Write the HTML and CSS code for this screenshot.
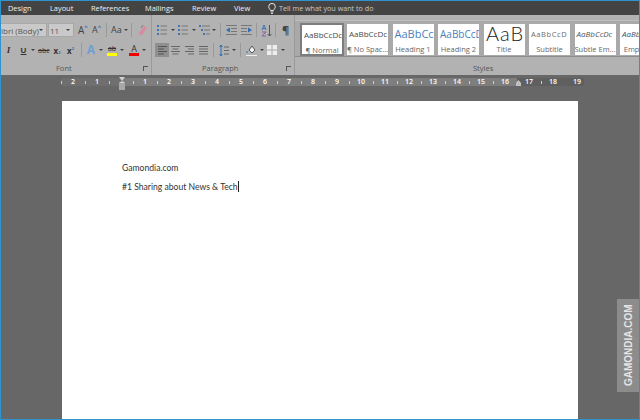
FILE: index.html
```html
<!DOCTYPE html>
<html lang="en">
<head>
    <meta charset="UTF-8">
    <title>Document - Word</title>
    <link rel="stylesheet" href="styles.css">
</head>
<body>
<div class="window">
    <nav class="tabs">
        <span class="tab tab-design">Design</span>
        <span class="tab tab-layout">Layout</span>
        <span class="tab tab-refs">References</span>
        <span class="tab tab-mail">Mailings</span>
        <span class="tab tab-review">Review</span>
        <span class="tab tab-view">View</span>
        <svg class="bulb" width="8" height="11" viewBox="0 0 8 11"><path d="M2.500 7.500C2 6 .7 5.500.7 3.700a3.300 3.300 0 0 1 6.600 0C7.300 5.500 6 6 5.500 7.500zM2.700 9h2.600M3.200 10.500h1.600" fill="none" stroke="#e8e8e8"/></svg>
        <span class="tell">Tell me what you want to do</span>
    </nav>

    <section class="ribbon">
        <div class="group group-font">
            <div class="row row-top">
                <div class="combo combo-name"><span>ibri (Body)</span><i class="caret"></i></div>
                <div class="combo combo-size"><span>11</span><i class="caret"></i></div>
                <span class="glyph grow ml4">A<b class="tick">^</b></span>
                <span class="glyph shrink ml4">A<b class="tick">^</b></span>
                <i class="sep ml4"></i>
                <span class="glyph case ml4">Aa</span><i class="caret ml2"></i>
                <i class="sep ml3"></i>
                <svg class="ml6" width="10" height="12" viewBox="0 0 10 12"><path d="M1 9l5-7 3 2-5 7H2z" fill="#d98a9c"/><path d="M5 1L3 4" stroke="#777"/></svg>
            </div>
            <div class="row row-bottom">
                <span class="fmt italic ml5">I</span>
                <span class="fmt under ml9">U</span><i class="caret ml4"></i>
                <span class="fmt abc ml3">abc</span>
                <span class="fmt sub ml4">x<small>2</small></span>
                <span class="fmt sup ml5">x<sup>2</sup></span>
                <i class="sep ml6"></i>
                <span class="glyph effect ml4">A</span><i class="caret ml3"></i>
                <span class="swatch ml4"><em>ab</em><i class="bar bar-yellow"></i></span><i class="caret ml3"></i>
                <span class="swatch ml5"><em class="plain">A</em><i class="bar bar-red"></i></span><i class="caret ml3"></i>
            </div>
            <div class="label label-font">Font<i class="launch"></i></div>
        </div>

        <div class="group group-para">
            <div class="row row-top">
                <svg class="ml5" width="10" height="12" viewBox="0 0 10 12"><path d="M0 2h2M0 6h2M0 10h2" stroke="#3f74b5" stroke-width="2"/><path d="M3.500 2H10M3.500 6H10M3.500 10H10" stroke="#777"/></svg><i class="caret ml4"></i>
                <svg class="ml3" width="10" height="12" viewBox="0 0 10 12"><path d="M0 2h2M0 6h2M0 10h2" stroke="#3f74b5" stroke-width="2"/><path d="M3.500 2H10M3.500 6H10M3.500 10H10" stroke="#777"/></svg><i class="caret ml4"></i>
                <svg class="ml3" width="11" height="12" viewBox="0 0 11 12"><path d="M0 2h2M2 6h2M4 10h2" stroke="#3f74b5" stroke-width="2"/><path d="M3 2h8M5 6h6M7 10h4" stroke="#777"/></svg><i class="caret ml2"></i>
                <i class="sep ml4"></i>
                <svg class="ml5" width="11" height="12" viewBox="0 0 11 12"><path d="M0 1.500h11M5 4.500h6M5 7.500h6M0 10.500h11" stroke="#777"/><path d="M4 3.500v5L0 6z" fill="#2f6db3"/></svg>
                <svg class="ml4" width="11" height="12" viewBox="0 0 11 12"><path d="M0 1.500h11M0 4.500h6M0 7.500h6M0 10.500h11" stroke="#777"/><path d="M7 3.500v5L11 6z" fill="#2f6db3"/></svg>
                <i class="sep ml4"></i>
                <svg class="ml4" width="11" height="13" viewBox="0 0 11 13"><path d="M1 6l2-5 2 5M1.500 4.500h3" fill="none" stroke="#3f74b5"/><path d="M1 8h4L1 12h4" fill="none" stroke="#8a5aa8"/><path d="M8.500 1v11M6.500 10l2 2 2-2" fill="none" stroke="#555"/></svg>
                <i class="sep ml3"></i>
                <span class="pilcrow ml6">¶</span>
            </div>
            <div class="row row-bottom">
                <span class="align-on ml3"><svg width="9" height="9" viewBox="0 0 9 9"><path d="M0 .5h9M0 3h6M0 5.500h9M0 8h6" stroke="#555"/></svg></span>
                <svg class="ml2" width="9" height="9" viewBox="0 0 9 9"><path d="M0 .5h9M1.500 3h6M0 5.500h9M1.500 8h6" stroke="#666"/></svg>
                <svg class="ml5" width="9" height="9" viewBox="0 0 9 9"><path d="M0 .5h9M3 3h6M0 5.500h9M3 8h6" stroke="#666"/></svg>
                <svg class="ml5" width="9" height="9" viewBox="0 0 9 9"><path d="M0 .5h9M0 3h9M0 5.500h9M0 8h9" stroke="#666"/></svg>
                <i class="sep ml5"></i>
                <svg class="ml5" width="10" height="13" viewBox="0 0 10 13"><path d="M2 1v11M.5 3L2 1l1.500 2M.5 10L2 12l1.500-2" fill="none" stroke="#2f6db3"/><path d="M5 3h5M5 6.500h5M5 10h5" stroke="#666"/></svg><i class="caret ml3"></i>
                <i class="sep ml4"></i>
                <svg class="ml5" width="11" height="12" viewBox="0 0 11 12"><path d="M3 6l3-4 3 4-3 3z" fill="#f2f2f2" stroke="#555"/><path d="M1 7c-1 1-1 2 0 2s1-1 0-2z" fill="#2f6db3"/><path d="M0 11.500h11" stroke="#eee"/></svg><i class="caret ml3"></i>
                <svg class="ml3" width="10" height="10" viewBox="0 0 10 10"><path d="M0 0h10v10H0z" fill="#eee"/><path d="M5 0v10M0 5h10" stroke="#aaa"/></svg><i class="caret ml4"></i>
            </div>
            <div class="label label-para">Paragraph<i class="launch"></i></div>
        </div>

        <div class="group group-styles">
            <div class="gallery">
                <div class="tile tile-on"><div class="sample s-normal">AaBbCcDc</div><div class="name">¶ Normal</div></div>
                <div class="tile"><div class="sample s-normal">AaBbCcDc</div><div class="name">¶ No Spac...</div></div>
                <div class="tile"><div class="sample s-h1">AaBbCc</div><div class="name">Heading 1</div></div>
                <div class="tile"><div class="sample s-h2">AaBbCcD</div><div class="name">Heading 2</div></div>
                <div class="tile"><div class="sample s-title">AaB</div><div class="name">Title</div></div>
                <div class="tile"><div class="sample s-sub">AaBbCcD</div><div class="name">Subtitle</div></div>
                <div class="tile"><div class="sample s-em">AaBbCcDc</div><div class="name">Subtle Em...</div></div>
                <div class="tile"><div class="sample s-em2">AaBbCcDc</div><div class="name">Emphasis</div></div>
            </div>
            <div class="label label-styles">Styles</div>
        </div>
    </section>

    <div class="ruler">
        <span>2</span><span>1</span><span>&nbsp;</span><span>1</span><span>2</span><span>3</span><span>4</span><span>5</span><span>6</span><span>7</span><span>8</span><span>9</span><span>10</span><span>11</span><span>12</span><span>13</span><span>14</span><span>15</span><span>16</span><span>17</span><span>18</span><span>19</span>
        <i class="marker marker-left"></i>
        <i class="marker marker-right"></i>
    </div>

    <main class="page">
        <p>Gamondia.com</p>
        <p>#1 Sharing about News &amp; Tech<i class="cursor"></i></p>
    </main>

    <div class="watermark">GAMONDIA.COM</div>
</div>
</body>
</html>
```

FILE: styles.css
```css
* {
    box-sizing: border-box;
}

body {
    margin: 0;
    font-family: 'Open Sans', sans-serif;
    overflow: hidden;
}

i, em {
    font-style: normal;
}

.ml2 { margin-left: 2px; }
.ml3 { margin-left: 3px; }
.ml4 { margin-left: 4px; }
.ml5 { margin-left: 5px; }
.ml6 { margin-left: 6px; }
.ml9 { margin-left: 9px; }

.window {
    position: relative;
    width: 640px;
    height: 420px;
    display: flex;
    flex-direction: column;
    background: #676767;
    border: 1px solid #2f93cf;
    overflow: hidden;
}

/* tabs */
.tabs {
    height: 14px;
    background: #444;
    color: #f0f0f0;
    font-size: 7.4px;
    line-height: 13px;
    display: flex;
    align-items: center;
    flex-shrink: 0;
}

.tab {
    white-space: nowrap;
}

.tab-design { margin-left: 7px; width: 42px; }
.tab-layout { width: 41px; }
.tab-refs { width: 54px; }
.tab-mail { width: 47px; }
.tab-review { width: 42px; }
.tab-view { width: 34px; }

.bulb {
    margin-right: 3px;
}

.tell {
    color: #c8c8c8;
    font-size: 7.2px;
    white-space: nowrap;
}

/* ribbon */
.ribbon {
    height: 60px;
    background: #b2b2b2;
    display: flex;
    flex-shrink: 0;
}

.group {
    position: relative;
    flex-shrink: 0;
    border-right: 1px solid #9a9a9a;
}

.group-font { width: 151px; }
.group-para { width: 143px; }
.group-styles { flex: 1; border: 0; overflow: hidden; }

.row {
    display: flex;
    align-items: center;
    color: #404040;
}

.row-top {
    height: 14px;
    margin-top: 8px;
}

.row-bottom {
    height: 14px;
    margin-top: 6px;
}

.combo {
    height: 14px;
    background: #c9c9c9;
    border: 1px solid #a8a8a8;
    display: flex;
    align-items: center;
    justify-content: space-between;
    padding: 0 3px 0 1px;
    font-size: 8px;
    color: #555;
}

.combo-name { width: 46px; border-left: 0; padding-left: 0; }
.combo-size { width: 26px; margin-left: 1px; }

.caret {
    width: 0;
    height: 0;
    flex-shrink: 0;
    border-left: 2px solid transparent;
    border-right: 2px solid transparent;
    border-top: 2px solid #404040;
}

.sep {
    width: 1px;
    height: 14px;
    flex-shrink: 0;
    background: #999;
}

.glyph {
    position: relative;
    font-size: 10px;
    line-height: 12px;
    color: #444;
}

.grow, .shrink {
    width: 10px;
    white-space: nowrap;
}

.shrink {
    font-size: 9px;
}

.tick {
    font-size: 6px;
    color: #2f6db3;
    line-height: 6px;
    vertical-align: top;
}

.case {
    font-size: 9px;
}

.effect {
    width: 10px;
    font-size: 12px;
    font-weight: bold;
    color: #6f9fd6;
    text-align: center;
}

.fmt {
    font-size: 8px;
    color: #333;
    font-weight: bold;
    text-align: center;
}

.italic { width: 5px; font-family: 'Liberation Serif', serif; font-style: italic; font-size: 9px; }
.under { width: 7px; text-decoration: underline; font-family: 'Liberation Sans', sans-serif; }
.abc { width: 11px; text-decoration: line-through; font-size: 7px; font-weight: normal; white-space: nowrap; }
.sub { width: 8px; }
.sup { width: 9px; }
.sub small, .sup sup { font-size: 4px; color: #2f6db3; }
.sup sup { line-height: 4px; }

.swatch {
    width: 10px;
    display: flex;
    flex-direction: column;
    align-items: stretch;
    font-size: 8px;
    line-height: 9px;
    text-align: center;
    color: #333;
}

.swatch em { text-decoration: line-through; font-size: 7px; }
.swatch em.plain { text-decoration: none; font-size: 9px; }

.bar {
    height: 3px;
}

.bar-yellow { background: #ffff00; }
.bar-red { background: #f00000; }

.pilcrow {
    font-size: 11px;
    font-weight: bold;
    color: #444;
    line-height: 12px;
}

.align-on {
    width: 14px;
    height: 14px;
    background: #8f8f8f;
    display: flex;
    align-items: center;
    justify-content: center;
}

.label {
    position: absolute;
    left: 0;
    right: 0;
    bottom: 2px;
    font-size: 7.5px;
    line-height: 10px;
    color: #555;
}

.label-font { padding-left: 55px; }
.label-para { padding-left: 50px; }
.label-styles { padding-left: 178px; }

.launch {
    position: absolute;
    right: 3px;
    top: 3px;
    width: 5px;
    height: 5px;
    border-left: 1px solid #555;
    border-top: 1px solid #555;
}

.gallery {
    height: 37px;
    margin-top: 5px;
    padding: 3px 0 0 5px;
    display: flex;
    gap: 4.5px;
    background: #a9a9a9;
    border-bottom: 1px solid #8c8c8c;
    border-top: 1px solid #bdbdbd;
}

.tile {
    width: 41px;
    height: 31px;
    flex-shrink: 0;
    background: #fff;
    overflow: hidden;
    text-align: center;
}

.tile-on {
    width: 44px;
    height: 33px;
    margin: -1px -1.500px 0 0;
    border: 2px solid #7d7d7d;
}

.sample {
    height: 20px;
    line-height: 20px;
    white-space: nowrap;
    overflow: hidden;
    font-size: 8px;
    color: #4a4a4a;
    padding-left: 2px;
    text-align: left;
}

.s-h1 { font-size: 11px; color: #4a7fbd; }
.s-h2 { font-size: 10px; color: #4a7fbd; }
.s-title { font-family: 'Lato', sans-serif; font-size: 20px; line-height: 19px; color: #222; font-weight: 300; text-align: center; letter-spacing: 1px; }
.s-sub { color: #6c6c6c; letter-spacing: 0.6px; font-size: 7.5px; }
.s-em, .s-em2 { font-style: italic; color: #555; }
.s-em2 { color: #35557c; }

.name {
    font-size: 7.5px;
    line-height: 10px;
    color: #666;
    white-space: nowrap;
}

/* ruler */
.ruler {
    position: relative;
    height: 8px;
    margin: 3px 0 0 60px;
    width: 523px;
    display: flex;
    background: linear-gradient(to right, #6f6f6f 61px, #7e7e7e 61px, #7e7e7e 456px, #5f5f5f 456px);
    flex-shrink: 0;
}

.ruler span {
    width: 24px;
    flex-shrink: 0;
    font-size: 7px;
    font-weight: 600;
    line-height: 8px;
    text-align: center;
    color: #fff;
    background:
        linear-gradient(#ccc, #ccc) 0 center / 1px 3px no-repeat,
        radial-gradient(circle, #ccc 0.5px, transparent 0.7px) 0 0 / 12px 8px;
}

.ruler span:last-of-type {
    background: none;
}

.marker {
    position: absolute;
}

.marker-left {
    left: 58px;
    top: -1px;
    width: 6px;
    height: 13px;
    background: linear-gradient(#d0d0d0 45%, #a8a8a8 45%);
    clip-path: polygon(0 0, 100% 0, 50% 30%, 100% 45%, 100% 100%, 0 100%, 0 45%, 50% 30%);
}

.marker-right {
    left: 455px;
    top: 2px;
    width: 5px;
    height: 6px;
    background: #c0c0c0;
    clip-path: polygon(50% 0, 100% 50%, 100% 100%, 0 100%, 0 50%);
}

/* document */
.page {
    width: 516px;
    height: 340px;
    margin: 15px 0 0 61px;
    padding: 61px 0 0 60px;
    background: #fff;
    color: #333;
    font-family: 'Lato', sans-serif;
    font-size: 8.600px;
    flex-shrink: 0;
}

.page p {
    margin: 0 0 7px;
    line-height: 12px;
    white-space: nowrap;
}

.cursor {
    display: inline-block;
    width: 1px;
    height: 11px;
    background: #222;
    vertical-align: -2px;
}

.watermark {
    position: absolute;
    right: -1px;
    top: 298px;
    width: 23px;
    height: 93px;
    background: #8c8c8c;
    color: #e4e4e4;
    font-family: 'Liberation Sans', sans-serif;
    font-size: 10px;
    font-weight: bold;
    writing-mode: vertical-rl;
    transform: rotate(180deg);
    text-align: center;
    line-height: 23px;
}
```
